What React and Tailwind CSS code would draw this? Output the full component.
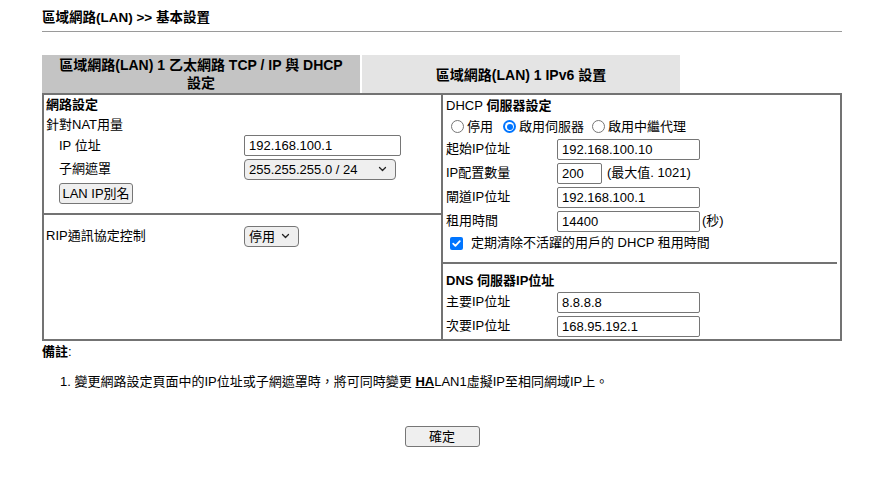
import React from "react";

function TextInput({ value, w = "w-[143px]" }) {
  return (
    <input
      readOnly
      value={value}
      className={`${w} h-[21px] border border-[#767676] rounded-[2px] px-[4px] text-[13px] leading-[19px] bg-white text-black outline-none`}
    />
  );
}

function Chevron() {
  return (
    <svg width="9" height="6" viewBox="0 0 9 6" className="shrink-0">
      <path d="M1.5 1.5l3 3 3-3" stroke="#222" fill="none" strokeWidth="1.3" strokeLinecap="round" strokeLinejoin="round" />
    </svg>
  );
}

function Select({ value, w }) {
  return (
    <div
      className={`${w} h-[21px] flex items-center justify-between border border-[#767676] rounded-[4px] bg-[#efefef] pl-[4px] pr-[8px] text-[13px] leading-[19px]`}
    >
      <span>{value}</span>
      <Chevron />
    </div>
  );
}

function Radio({ checked }) {
  return checked ? (
    <span className="w-[13px] h-[13px] rounded-full bg-[#0075ff] flex items-center justify-center shrink-0">
      <span className="w-[9px] h-[9px] rounded-full bg-white flex items-center justify-center">
        <span className="w-[6px] h-[6px] rounded-full bg-[#0075ff]" />
      </span>
    </span>
  ) : (
    <span className="w-[13px] h-[13px] rounded-full border border-[#767676] bg-white shrink-0" />
  );
}

function Checkbox() {
  return (
    <span className="w-[13px] h-[13px] rounded-[2px] bg-[#0075ff] flex items-center justify-center shrink-0">
      <svg width="11" height="11" viewBox="0 0 11 11">
        <path d="M2.2 5.6l2.2 2.2 4.4-4.6" stroke="#fff" strokeWidth="1.8" fill="none" strokeLinecap="round" strokeLinejoin="round" />
      </svg>
    </span>
  );
}

function RightRow({ label, children }) {
  return (
    <div className="h-[24px] flex items-center">
      <div className="w-[111px]">{label}</div>
      {children}
    </div>
  );
}

export default function App() {
  return (
    <div className="w-[881px] h-[482px] bg-white text-black font-['Liberation_Sans','Noto_Sans_CJK_TC',sans-serif] text-[13px] pl-[42px]">
      <div className="w-[800px]">
        <div className="pt-[10px] h-[26px] leading-[16px] font-bold text-[13.5px]">
          區域網路(LAN) &gt;&gt; 基本設置
        </div>
        <div className="mt-[5px] border-t border-[#9a9a9a]" />

        <div className="mt-[23px] flex gap-[2px]">
          <div className="w-[318px] h-[38px] bg-[#c4c4c4] flex items-center justify-center text-center font-bold text-[14px] leading-[18px]">
            <span>
              區域網路(LAN) 1 乙太網路 TCP / IP 與 DHCP
              <br />
              設定
            </span>
          </div>
          <div className="w-[318px] h-[38px] bg-[#e4e4e4] flex items-center justify-center font-bold text-[14px] pt-[3px]">
            區域網路(LAN) 1 IPv6 設置
          </div>
        </div>

        <div className="flex border-2 border-[#737373] h-[248px]">
          {/* Left panel */}
          <div className="w-[399px] border-r-2 border-[#737373] flex flex-col">
            <div className="pl-[2px] flex flex-col">
              <div className="h-[20px] flex items-center font-bold">網路設定</div>
              <div className="h-[19px] flex items-center">針對NAT用量</div>
              <div className="h-[23px] flex items-center pl-[13px]">
                <div className="w-[185px]">IP 位址</div>
                <TextInput value="192.168.100.1" w="w-[157px]" />
              </div>
              <div className="h-[24px] flex items-center pl-[13px]">
                <div className="w-[185px]">子網遮罩</div>
                <Select value="255.255.255.0 / 24" w="w-[152px]" />
              </div>
              <div className="h-[24px] flex items-center pl-[13px]">
                <button className="w-[74px] h-[21px] border border-[#767676] rounded-[3px] bg-[#efefef] text-[13px] leading-[19px]">
                  LAN IP別名
                </button>
              </div>
            </div>
            <div className="mt-[8px] border-t-2 border-[#737373]" />
            <div className="pl-[2px] h-[42px] flex items-center">
              <div className="w-[198px]">RIP通訊協定控制</div>
              <Select value="停用" w="w-[55px]" />
            </div>
          </div>

          {/* Right panel */}
          <div className="flex-1 flex flex-col">
            <div className="pl-[3px] flex flex-col">
              <div className="h-[21px] flex items-center">
                DHCP&nbsp;<span className="font-bold">伺服器設定</span>
              </div>
              <div className="h-[21px] flex items-center pl-[5px]">
                <Radio />
                <span className="ml-[3px] mr-[10px]">停用</span>
                <Radio checked />
                <span className="ml-[3px] mr-[8px]">啟用伺服器</span>
                <Radio />
                <span className="ml-[3px]">啟用中繼代理</span>
              </div>
              <RightRow label="起始IP位址">
                <TextInput value="192.168.100.10" />
              </RightRow>
              <RightRow label="IP配置數量">
                <TextInput value="200" w="w-[45px]" />
                <span className="ml-[5px]">(最大值. 1021)</span>
              </RightRow>
              <RightRow label="閘道IP位址">
                <TextInput value="192.168.100.1" />
              </RightRow>
              <RightRow label="租用時間">
                <TextInput value="14400" />
                <span className="ml-[2px]">(秒)</span>
              </RightRow>
              <div className="h-[20px] flex items-center pl-[4px]">
                <Checkbox />
                <span className="ml-[8px]">定期清除不活躍的用戶的 DHCP 租用時間</span>
              </div>
            </div>
            <div className="mt-[9px] mr-[3px] border-t-2 border-[#737373]" />
            <div className="pl-[3px] pt-[7px] flex flex-col">
              <div className="h-[19px] flex items-center font-bold">DNS 伺服器IP位址</div>
              <RightRow label="主要IP位址">
                <TextInput value="8.8.8.8" />
              </RightRow>
              <RightRow label="次要IP位址">
                <TextInput value="168.95.192.1" />
              </RightRow>
            </div>
          </div>
        </div>

        <div className="mt-[2px] leading-[18px]">
          <span className="font-bold">備註</span>:
        </div>
        <div className="mt-[12px] pl-[18px] leading-[18px]">
          1. 變更網路設定頁面中的IP位址或子網遮罩時，將可同時變更{" "}
          <span className="font-bold underline">HA</span>LAN1虛擬IP至相同網域IP上。
        </div>
        <div className="mt-[35px] flex justify-center">
          <button className="w-[75px] h-[21px] border border-[#767676] rounded-[3px] bg-[#efefef] text-[13px] leading-[19px]">
            確定
          </button>
        </div>
      </div>
    </div>
  );
}
